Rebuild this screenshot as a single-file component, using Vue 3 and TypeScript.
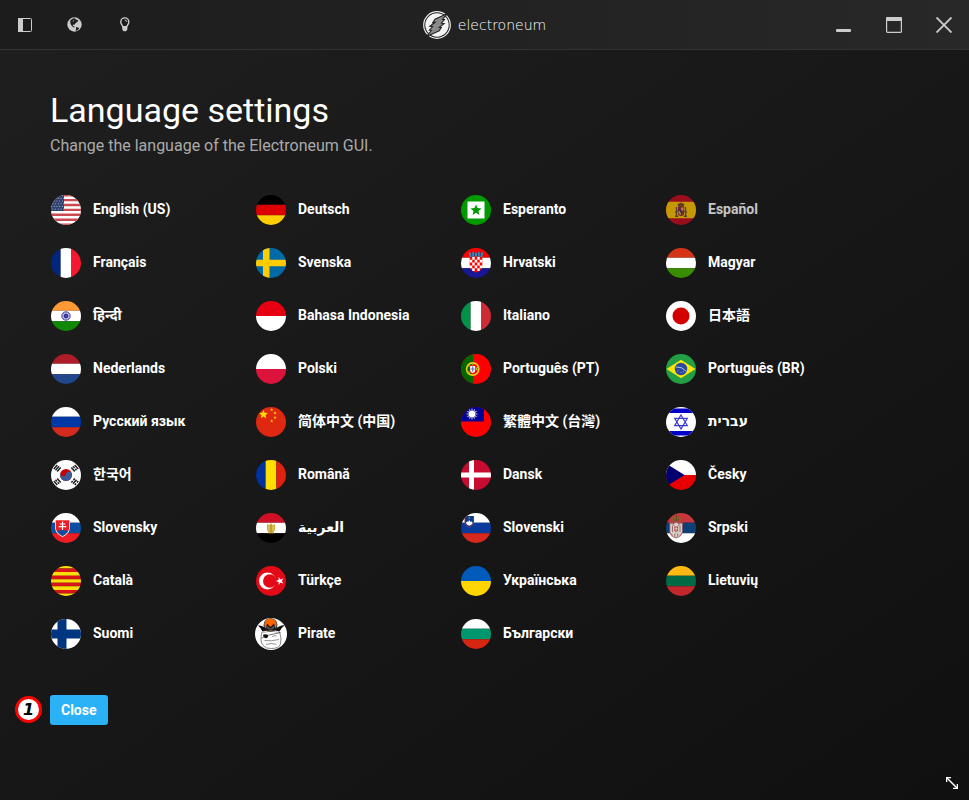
<script setup lang="ts">
import { ref } from 'vue'

interface Shape {
  d: string
  fill?: string
  stroke?: string
  width?: number
}

interface Language {
  code: string
  label: string
  shapes: Shape[]
}

const fill = (color: string, d: string): Shape => ({ d, fill: color })
const line = (color: string, width: number, d: string): Shape => ({ d, stroke: color, width })

const rows = (...colors: string[]): Shape[] =>
  colors.map((c, i) => {
    const h = 32 / colors.length
    return fill(c, `M0 ${i * h}H32V${(i + 1) * h}H0Z`)
  })

const columns = (...colors: string[]): Shape[] =>
  colors.map((c, i) => {
    const w = 32 / colors.length
    return fill(c, `M${i * w} 0H${(i + 1) * w}V32H${i * w}Z`)
  })

const disc = (color: string, cx: number, cy: number, r: number): Shape =>
  fill(color, `M${cx - r} ${cy}a${r} ${r} 0 1 0 ${2 * r} 0a${r} ${r} 0 1 0 ${-2 * r} 0Z`)

const ring = (color: string, width: number, cx: number, cy: number, r: number): Shape => ({
  ...disc(color, cx, cy, r),
  fill: undefined,
  stroke: color,
  width,
})

const star = (color: string, cx: number, cy: number, r: number, points = 5, inner = 0.4, turn = -90): Shape => {
  const pts = Array.from({ length: points * 2 }, (_, i) => {
    const a = ((turn + (i * 180) / points) * Math.PI) / 180
    const q = i % 2 ? r * inner : r
    return `${(cx + q * Math.cos(a)).toFixed(2)} ${(cy + q * Math.sin(a)).toFixed(2)}`
  })
  return fill(color, `M${pts.join('L')}Z`)
}

const checker = (): string => {
  let d = ''
  for (let y = 0; y < 5; y++) {
    for (let x = 0; x < 5; x++) {
      if ((x + y) % 2) d += `M${9.7 + x * 2.5} ${10 + y * 2.8}h2.5v2.8h-2.5Z`
    }
  }
  return d
}

const cantonStars = (): Shape[] => {
  const list: Shape[] = []
  for (let y = 0; y < 6; y++) {
    for (let x = 0; x < 5; x++) {
      list.push(disc('#a9b4cf', 1.6 + x * 2.7 + (y % 2) * 1.3, 1.6 + y * 2.7, 0.55))
    }
  }
  return list
}

const languages: Language[] = [
  {
    code: 'en',
    label: 'English (US)',
    shapes: [
      fill('#fff', 'M0 0H32V32H0Z'),
      line('#c94a53', 2.4, 'M0 1.2H32M0 6.1H32M0 11H32M0 15.9H32M0 20.8H32M0 25.7H32M0 30.6H32'),
      fill('#30416f', 'M0 0H14V17H0Z'),
      ...cantonStars(),
    ],
  },
  { code: 'de', label: 'Deutsch', shapes: rows('#000', '#d00', '#ffce00') },
  {
    code: 'eo',
    label: 'Esperanto',
    shapes: [fill('#090', 'M0 0H32V32H0Z'), fill('#fff', 'M7.5 7.5H24.5V24.5H7.5Z'), star('#090', 16, 16.2, 5.8, 5, 0.45)],
  },
  {
    code: 'es',
    label: 'Español',
    shapes: [
      fill('#c60b1e', 'M0 0H32V32H0Z'),
      fill('#ffc400', 'M0 7.8H32V24.2H0Z'),
      fill('#93272b', 'M13 13h6v6q0 3-3 3t-3-3Z'),
      fill('#d9a560', 'M16 13.5h2.5v3.2H16ZM13.5 17H16v4q-2-.5-2.5-2Z'),
      fill('#7b4a24', 'M12.5 10.5L14 9.6l2-1 2 1 1.5.9-.8 2.5h-5.4Z'),
      line('#6d4c3d', 1.4, 'M11.5 13v9M20.5 13v9M10 22.3h3.2M18.8 22.3H22M10 18.5l3-2M22 18.5l-3-2'),
      disc('#27406b', 16, 17.5, 1.2),
    ],
  },
  { code: 'fr', label: 'Français', shapes: columns('#00267f', '#fff', '#f31830') },
  {
    code: 'sv',
    label: 'Svenska',
    shapes: [fill('#006aa7', 'M0 0H32V32H0Z'), fill('#fecc00', 'M8 0H14.5V12.7H32V19.3H14.5V32H8V19.3H0V12.7H8Z')],
  },
  {
    code: 'hr',
    label: 'Hrvatski',
    shapes: [
      ...rows('#f00', '#fff', '#171796'),
      fill('#f00', 'M9.7 9.5H22.3V19q0 4.5-6.3 6.8Q9.700 23.5 9.7 19Z'),
      fill('#fff', checker()),
      fill('#171796', 'M9 21.4H9.7Q10.5 24 16 25.9 21.5 24 22.3 21.4H24V28H9Z'),
      fill('#4b7fa3', 'M8.7 5l2.7 1.2L13.5 4.5 16 6l2.5-1.5L20.6 6.2 23.3 5l-1 5.3Q16 8.5 9.7 10.3Z'),
      line('#293d76', 0.9, 'M11.7 5.5v4M14.5 5v4M17.5 5v4M20.3 5.5v4'),
    ],
  },
  { code: 'hu', label: 'Magyar', shapes: rows('#d43516', '#fff', '#388d00') },
  {
    code: 'hi',
    label: 'हिन्दी',
    shapes: [
      ...rows('#ff9933', '#fff', '#128807'),
      disc('#c9c9e8', 16, 16, 4.2),
      ring('#4343a5', 1, 16, 16, 4.2),
      disc('#20209a', 16, 16, 2.3),
      line('#5b5bb0', 0.5, 'M16 12V20M12 16H20M13.2 13.2L18.8 18.8M18.8 13.2L13.2 18.8'),
    ],
  },
  { code: 'id', label: 'Bahasa Indonesia', shapes: rows('#e70011', '#fff') },
  { code: 'it', label: 'Italiano', shapes: columns('#009246', '#fff', '#ce2b37') },
  { code: 'ja', label: '日本語', shapes: [fill('#fff', 'M0 0H32V32H0Z'), disc('#d30000', 16, 16, 8.5)] },
  { code: 'nl', label: 'Nederlands', shapes: rows('#ae1c28', '#fff', '#21468b') },
  { code: 'pl', label: 'Polski', shapes: rows('#fff', '#dc143c') },
  {
    code: 'pt',
    label: 'Português (PT)',
    shapes: [
      fill('#f00', 'M0 0H32V32H0Z'),
      fill('#060', 'M0 0H13V32H0Z'),
      ring('#e8d21d', 1.6, 12.7, 16, 6.1),
      line('#d0ae14', 1.1, 'M7.2 13.5Q13 11 18.2 18M7 18.5Q13 21 18 13.5M12.7 10V22'),
      fill('#f00', 'M9.5 12.2H15.9V17.5q0 3-3.2 3.4-3.2-.4-3.2-3.4Z'),
      fill('#fff', 'M10.2 13H15.2V17.2q0 2.4-2.5 2.8-2.5-.4-2.5-2.8Z'),
      line('#6078a8', 1.2, 'M12.7 13.6V18.7M10.8 16H14.7'),
    ],
  },
  {
    code: 'pt-br',
    label: 'Português (BR)',
    shapes: [
      fill('#229e45', 'M0 0H32V32H0Z'),
      fill('#f8e509', 'M1.5 16L16 6.8 30.5 16 16 25.2Z'),
      disc('#2b49a3', 16, 16, 6.2),
      line('#a9c3c8', 1, 'M10.7 14Q17 13.2 21.3 18.4'),
      disc('#8ea6c6', 13, 18, 0.6),
      disc('#8ea6c6', 16, 19.5, 0.6),
      disc('#8ea6c6', 18.5, 18.8, 0.5),
    ],
  },
  { code: 'ru', label: 'Русский язык', shapes: rows('#fff', '#0039a6', '#d52b1e') },
  {
    code: 'zh-cn',
    label: '简体中文 (中国)',
    shapes: [
      fill('#de2910', 'M0 0H32V32H0Z'),
      star('#ffde00', 8.5, 8.5, 4.6, 5, 0.45),
      star('#ffde00', 16.7, 3.7, 1.7),
      star('#ffde00', 20, 7, 1.7),
      star('#ffde00', 20, 11.5, 1.7),
      star('#ffde00', 16.7, 15, 1.7),
    ],
  },
  {
    code: 'zh-tw',
    label: '繁體中文 (台灣)',
    shapes: [
      fill('#f00', 'M0 0H32V32H0Z'),
      fill('#000095', 'M0 0H24V15.5H0Z'),
      star('#fff', 12, 8, 6.2, 12, 0.5),
      ring('#000095', 0.6, 12, 8, 3.5),
      disc('#fff', 12, 8, 3.2),
    ],
  },
  {
    code: 'he',
    label: 'עברית',
    shapes: [
      fill('#fff', 'M0 0H32V32H0Z'),
      fill('#0000c8', 'M0 2.5H32V7H0ZM0 25H32V29.5H0Z'),
      line('#3c3cd0', 1.2, 'M16 9L22.3 19.7H9.7ZM16 23L9.7 12.3H22.3Z'),
    ],
  },
  {
    code: 'ko',
    label: '한국어',
    shapes: [
      fill('#fff', 'M0 0H32V32H0Z'),
      disc('#c70000', 16, 16, 6),
      fill('#3d5897', 'M10.2 14.5Q12 19 16 16A3 3 0 0 1 21.8 14.6A6 6 0 1 1 10.2 14.5Z'),
      line('#222', 1.5, 'M3.8 10L7.3 6M5.5 11.2L9 7.2M7.2 12.4L10.7 8.4'),
      line('#222', 1.5, 'M24.700 6L28.2 10M23 7.2L24.500 8.900M25.200 9.700L26.500 11.2M21.3 8.4L24.8 12.4'),
      line('#222', 1.5, 'M3.8 22L7.3 26M5.5 20.8L6.900 22.400M7.700 23.300L9 24.8M7.2 19.6L10.7 23.6'),
      line('#222', 1.5, 'M24.700 26L26.100 24.400M26.800 23.600L28.2 22M23 24.8L26.5 20.8M21.3 23.6L22.700 22M23.400 21.200L24.8 19.6'),
    ],
  },
  { code: 'ro', label: 'Română', shapes: columns('#00319c', '#ffde00', '#de2110') },
  {
    code: 'da',
    label: 'Dansk',
    shapes: [fill('#c60c30', 'M0 0H32V32H0Z'), fill('#fff', 'M9 0H14V13.5H32V18.5H14V32H9V18.5H0V13.5H9Z')],
  },
  { code: 'cs', label: 'Česky', shapes: [...rows('#fff', '#e80000'), fill('#00006f', 'M0 4L19.5 16 0 28Z')] },
  {
    code: 'sk',
    label: 'Slovensky',
    shapes: [
      ...rows('#fff', '#0b4ea2', '#ee1c25'),
      fill('#fff', 'M5 7.5H20V15.5Q19.5 22 12.5 25 5.5 22 5 15.5Z'),
      fill('#ee1c25', 'M5.7 8.2H19.3V15.5Q19 21 12.5 24.1 6 21 5.7 15.5Z'),
      fill('#0b4ea2', 'M7.1 19.5Q9 17.6 10.5 18.6 12.5 16 14.5 18.6 16 17.6 17.9 19.5 15.7 22.7 12.5 24.1 9.3 22.7 7.1 19.5Z'),
      line('#fff', 1.2, 'M12.5 9.5V18M9.7 12H15.3M8.7 14.7H16.3'),
    ],
  },
  {
    code: 'ar',
    label: 'العربية',
    shapes: [
      ...rows('#ce1126', '#fff', '#000'),
      fill('#d1ad3c', 'M12 12l2.5 1.2.8-1.7h1.4l.8 1.7L20 12v6l-1.5 2 .5 1.200h-6l.5-1.2-1.500-2Z'),
      line('#f0e2b0', 0.6, 'M14 14v4.500M18 14v4.5'),
      line('#b58e24', 1, 'M16 13v7'),
    ],
  },
  {
    code: 'sl',
    label: 'Slovenski',
    shapes: [
      ...rows('#fff', '#0a3a9c', '#d8291c'),
      fill('#b43a4c', 'M4.5 4H14V9.5Q13.7 13.5 9.3 15.5 4.8 13.5 4.5 9.5Z'),
      fill('#123b83', 'M5 4H13.5V9.5Q13.2 13.2 9.3 15 5.3 13.2 5 9.5Z'),
      fill('#fff', 'M5.8 10.9L7.4 9.3 8.2 10 9.3 8 10.4 10 11.2 9.3 12.8 10.9Q11.5 12.9 9.3 13.8 7.1 12.9 5.8 10.9Z'),
      disc('#a99b66', 9.3, 6, 0.7),
    ],
  },
  {
    code: 'sr',
    label: 'Srpski',
    shapes: [
      ...rows('#c6363c', '#0c4076', '#fff'),
      fill('#b8656a', 'M4.5 10.500H17.7V19.500Q17 25 11.2 26.500 5.2 25 4.500 19.5Z'),
      fill('#d8cdca', 'M5.300 11.500L8.700 12.500 10.400 10.700H12L13.700 12.500 17 11.5V20.500L15.200 22.500 13.500 25.300H8.900L7.200 22.500 5.300 20.5Z'),
      fill('#b5483f', 'M9.3 14.500H13.1V18.5L11.2 20.5 9.3 18.5Z'),
      line('#7d5a57', 0.8, 'M7.500 13.500V20M15 13.5V20M9.800 21.5V25M12.700 21.5V25M8 12.500L9.500 14M14.500 12.5L13 14'),
      line('#eee', 0.7, 'M11.2 15V19.500M9.7 16.800H12.7'),
      fill('#93602a', 'M6.5 6.5Q8 4 11.3 4T16 6.5L14.7 9.5H8Z'),
      line('#51401f', 0.8, 'M11.3 2.5V9M8.5 6.5L9.5 9M14 6.5L13 9'),
    ],
  },
  {
    code: 'ca',
    label: 'Català',
    shapes: rows('#ffdd09', '#da121a', '#ffdd09', '#da121a', '#ffdd09', '#da121a', '#ffdd09', '#da121a', '#ffdd09'),
  },
  {
    code: 'tr',
    label: 'Türkçe',
    shapes: [
      fill('#e30a17', 'M0 0H32V32H0Z'),
      disc('#fff', 12.5, 16, 8.5),
      disc('#e30a17', 14.8, 16, 6.8),
      star('#fff', 25, 16, 4.2, 5, 0.4, 180),
    ],
  },
  { code: 'uk', label: 'Українська', shapes: rows('#005bbb', '#ffd500') },
  { code: 'lt', label: 'Lietuvių', shapes: rows('#fdb913', '#006a44', '#c1272d') },
  {
    code: 'fi',
    label: 'Suomi',
    shapes: [fill('#fff', 'M0 0H32V32H0Z'), fill('#003580', 'M7.5 0H16.5V11.5H32V20.5H16.5V32H7.5V20.5H0V11.5H7.5Z')],
  },
  {
    code: 'pirate',
    label: 'Pirate',
    shapes: [
      fill('#fff', 'M0 0H32V32H0Z'),
      line('#555', 0.7, 'M7 14Q4.5 23 8 27.5 11 31 16.5 30.5 24 30.5 25.5 26 27 20 24.5 14'),
      disc('#444', 15.5, 7, 7),
      disc('#f60', 15.5, 6.5, 6),
      fill('#111', 'M3 7.5Q5.500 7 8 8.5L11 10.5 12 5.5 15.5 9 19 5.5 20.5 10.5 24 8.5Q26.500 7 30 7 27 9 24.500 13.5 16 10.500 7.500 13.5 5.5 9.500 3 7.5Z'),
      fill('#4c4c4c', 'M11.5 10.5V7L15.5 10.5 19.5 7V10.5Q15.5 13 11.5 10.5Z'),
      line('#777', 0.6, 'M7.5 14.5Q16 11.8 24.5 14.5'),
      line('#444', 0.7, 'M6.500 20L11 17.7 25.500 14.500'),
      fill('#111', 'M8 16.8Q10.5 15.5 13 17 13.5 20 10.7 20.2 8.5 20 8 16.8Z'),
      line('#666', 0.7, 'M17 18.5Q19.5 17.3 21.5 18M9.5 22.5Q16 23.500 24 21.5M11 26.500Q16 24.500 21.5 26.3'),
    ],
  },
  { code: 'bg', label: 'Български', shapes: rows('#fff', '#00966e', '#d62612') },
]

const highlighted = ref('es')
</script>

<template>
  <div class="window">
    <header class="titlebar">
      <nav class="tools" aria-label="Tools">
        <button class="bar-button" type="button" aria-label="Toggle panel">
          <svg width="14" height="14" viewBox="0 0 14 14" aria-hidden="true">
            <rect x="0.5" y="0.5" width="13" height="13" rx="1" fill="none" stroke="currentColor" />
            <path d="M0 0H5V14H0Z" fill="currentColor" />
          </svg>
        </button>
        <button class="bar-button" type="button" aria-label="Language">
          <svg width="16" height="16" viewBox="0 0 16 16" aria-hidden="true">
            <circle cx="7.5" cy="7.5" r="7.2" fill="currentColor" />
            <path
              d="M3.3 3.3L6 1.6 8.5 1.2 8 2.3 9.7 2.5 11.5 3.7 10.7 4.8 9.8 4.6 9.5 5.8 8.2 6.5 7.6 7.8 6 7.5 5.9 8.7 7.3 9.5 7.5 10.6 6.3 10.3 4.3 8.3 3.4 6.3Z M8.9 10L11 10.5 12.3 11.3 10.5 13.3 8.6 14 9.2 12Z"
              fill="#1c1d1f"
            />
            <path d="M5.8 3.3L7 3.8 6 4.9Z" fill="currentColor" />
          </svg>
        </button>
        <button class="bar-button" type="button" aria-label="Tips">
          <svg width="12" height="16" viewBox="0 0 12 16" aria-hidden="true">
            <path
              d="M3.8 9.8C3.6 8 1.8 7.4 1.8 4.9A4 4 0 0 1 9.8 4.9C9.8 7.4 8 8 7.8 9.8Z"
              fill="none"
              stroke="currentColor"
              stroke-width="1.4"
            />
            <path d="M5.8 3Q7.8 3.1 7.9 4.9" fill="none" stroke="currentColor" />
            <path d="M3.3 9.7H8.3V12.5L7 14.3H4.6L3.3 12.5Z" fill="currentColor" />
          </svg>
        </button>
      </nav>

      <div class="brand">
        <svg width="28" height="28" viewBox="0 0 28 28" aria-hidden="true">
          <circle cx="14" cy="14" r="13.3" fill="none" stroke="#eee" stroke-width="1.2" />
          <circle cx="14" cy="14" r="11.7" fill="#f4f4f4" />
          <path
            d="M24.5 2.5L12 8.2 9.8 11.6 12 11.4 6.8 15.2 9.6 15.6 6.400 19.200 8.400 19.500 3.500 25.500 16.200 19.800 18.300 16.400 16.200 16.300 21.200 12.600 18.500 12.200 21.500 8.500 19.500 8.400Z"
            fill="#8b8b8b"
            stroke="#222"
            stroke-width="1.1"
          />
        </svg>
        <span class="brand-name">electroneum</span>
      </div>

      <div class="controls">
        <button class="bar-button" type="button" aria-label="Minimize">
          <svg width="16" height="16" viewBox="0 0 16 16" aria-hidden="true">
            <rect x="0" y="12" width="15" height="3" rx="1" fill="currentColor" />
          </svg>
        </button>
        <button class="bar-button" type="button" aria-label="Maximize">
          <svg width="16" height="16" viewBox="0 0 16 16" aria-hidden="true">
            <rect x="0.6" y="0.6" width="14.8" height="14.8" rx="1" fill="none" stroke="currentColor" stroke-width="1.2" />
            <path d="M0 1Q0 0 1 0H15Q16 0 16 1V4H0Z" fill="currentColor" />
          </svg>
        </button>
        <button class="bar-button" type="button" aria-label="Close window">
          <svg width="16" height="16" viewBox="0 0 16 16" aria-hidden="true">
            <path d="M0.5 0.5L15.5 15.5M15.5 0.5L0.5 15.5" stroke="currentColor" stroke-width="1.9" />
          </svg>
        </button>
      </div>
    </header>

    <main class="content">
      <h1 class="title">Language settings</h1>
      <p class="subtitle">Change the language of the Electroneum GUI.</p>

      <ul class="languages">
        <li v-for="lang in languages" :key="lang.code">
          <button
            type="button"
            class="language"
            :class="{ 'is-highlighted': lang.code === highlighted, 'is-large': lang.code === 'pirate' }"
            @click="highlighted = lang.code"
          >
            <svg class="flag" width="32" height="32" viewBox="0 0 32 32" aria-hidden="true">
              <path
                v-for="(s, i) in lang.shapes"
                :key="i"
                :d="s.d"
                :fill="s.fill ?? 'none'"
                :stroke="s.stroke ?? 'none'"
                :stroke-width="s.width ?? 0"
              />
            </svg>
            <span class="language-name">{{ lang.label }}</span>
          </button>
        </li>
      </ul>

      <div class="actions">
        <span class="step">1</span>
        <button class="close" type="button">Close</button>
      </div>
    </main>

    <svg class="resize" width="12" height="12" viewBox="0 0 12 12" aria-hidden="true">
      <path d="M1 1L11 11" stroke="#fff" stroke-width="1.5" />
      <path d="M0 0H5V1.3H1.3V5H0ZM12 12H7V10.7H10.7V7H12Z" fill="#fff" />
    </svg>
  </div>
</template>

<style>
body {
  margin: 0;
  background: #141414;
}
</style>

<style scoped>
.window {
  position: relative;
  box-sizing: border-box;
  min-height: 100vh;
  display: flex;
  flex-direction: column;
  background: linear-gradient(145deg, #1f1f1f, #101010);
  color: #fff;
  font-family: Roboto, 'Noto Sans', 'Noto Sans CJK SC', 'Noto Sans CJK KR', 'DejaVu Sans', sans-serif;
}

button {
  margin: 0;
  padding: 0;
  border: 0;
  background: none;
  color: inherit;
  font: inherit;
  cursor: pointer;
}

.titlebar {
  display: grid;
  grid-template-columns: 1fr auto 1fr;
  align-items: center;
  box-sizing: border-box;
  height: 50px;
  border-bottom: 1px solid #333;
  background: linear-gradient(90deg, #1c1c1c, #282828);
}

.tools,
.controls {
  display: flex;
}

.controls {
  justify-content: flex-end;
}

.bar-button {
  display: flex;
  align-items: center;
  justify-content: center;
  width: 50px;
  height: 49px;
  color: #ccc;
}

.brand {
  display: flex;
  align-items: center;
  gap: 7px;
}

.brand-name {
  color: #fff;
  font-family: 'DejaVu Sans', sans-serif;
  font-size: 14px;
  font-weight: 200;
  line-height: 20px;
}

.content {
  padding: 40px 50px;
}

.title {
  margin: 0;
  font-size: 34px;
  font-weight: 400;
  line-height: 40px;
}

.subtitle {
  margin: 6px 0 0;
  color: #aaa;
  font-size: 16px;
  line-height: 20px;
}

.languages {
  display: grid;
  grid-template-columns: repeat(auto-fill, 205px);
  row-gap: 21px;
  margin: 38px 0 0;
  padding: 0;
  list-style: none;
}

.language {
  display: flex;
  align-items: flex-start;
  gap: 11px;
  width: 100%;
  height: 32px;
  text-align: left;
}

.is-highlighted {
  opacity: 0.75;
}

.flag {
  flex: none;
  clip-path: circle(15px);
}

.is-large .flag {
  clip-path: circle(16px);
}

.language-name {
  font-size: 14px;
  font-weight: 700;
  line-height: 30px;
  white-space: nowrap;
}

.actions {
  position: relative;
  display: flex;
  margin-top: 45px;
}

.step {
  position: absolute;
  left: -35px;
  top: 1px;
  box-sizing: border-box;
  width: 27px;
  height: 27px;
  border: 3px solid #f00;
  border-radius: 50%;
  background: #fff;
  color: #000;
  font-family: 'DejaVu Sans', sans-serif;
  font-size: 16px;
  font-style: italic;
  font-weight: 700;
  line-height: 21px;
  text-align: center;
}

.close {
  height: 30px;
  padding: 0 11px;
  border-radius: 3px;
  background: #2bb1f5;
  font-size: 14px;
  font-weight: 700;
}

.resize {
  position: absolute;
  right: 11px;
  bottom: 11px;
}
</style>
